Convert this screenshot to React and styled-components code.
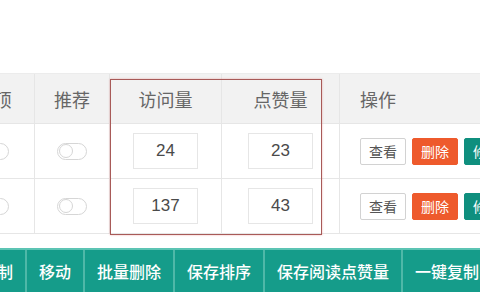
import React from "react";
import styled, { createGlobalStyle } from "styled-components";

const GlobalStyle = createGlobalStyle`
  html, body {
    margin: 0;
    padding: 0;
    background: #fff;
    font-family: "Noto Sans CJK SC", "Noto Sans", sans-serif;
  }
`;

const Page = styled.div`
  position: relative;
  width: 480px;
  height: 300px;
  overflow: hidden;
  padding-top: 73px;
  box-sizing: border-box;
`;

const Table = styled.div`
  margin-left: -47px;
  width: 600px;
  border-top: 1px solid #ececec;
`;

const Row = styled.div`
  display: grid;
  grid-template-columns: 82px 75px 112px 118px 1fr;
  height: ${(p) => (p.$head ? "49px" : "54px")};
  background: ${(p) => (p.$head ? "#f2f2f2" : "#fff")};
  border-bottom: 1px solid #e6e6e6;
`;

const Cell = styled.div`
  display: flex;
  align-items: center;
  justify-content: ${(p) => (p.$left ? "flex-start" : "center")};
  padding-left: ${(p) => (p.$left ? "20px" : "0")};
  border-right: 1px solid #e6e6e6;
  color: #666;
  font-size: ${(p) => (p.$head ? "18px" : "17px")};
  gap: 6px;
`;

const NumInput = styled.div`
  width: 65px;
  height: 36px;
  box-sizing: border-box;
  border: 1px solid #e6e6e6;
  display: flex;
  align-items: center;
  justify-content: center;
  font-family: "Liberation Sans", Arial, sans-serif;
  font-size: 17px;
  color: #4a4a4a;
  background: #fff;
`;

const Switch = styled.span`
  position: relative;
  width: 30px;
  height: 17px;
  box-sizing: border-box;
  border: 1.5px solid #d6d6d6;
  border-radius: 9px;

  &::before {
    content: "";
    position: absolute;
    left: 1px;
    top: 0px;
    width: 14px;
    height: 14px;
    box-sizing: border-box;
    border: 1.5px solid #d6d6d6;
    border-radius: 50%;
    background: #fff;
  }
`;

const Btn = styled.span`
  height: 27px;
  padding: 0 8px;
  box-sizing: border-box;
  display: inline-flex;
  align-items: center;
  font-size: 14px;
  border-radius: 2px;
  white-space: nowrap;
  color: ${(p) => (p.$kind === "plain" ? "#555" : "#fff")};
  background: ${(p) =>
    p.$kind === "danger" ? "#ee5a2c" : p.$kind === "teal" ? "#0f8f7e" : "#fff"};
  border: 1px solid
    ${(p) =>
      p.$kind === "danger" ? "#ee5a2c" : p.$kind === "teal" ? "#0f8f7e" : "#d2d2d2"};
`;

const Toolbar = styled.div`
  display: flex;
  margin-top: 14px;
  margin-left: -31px;
  height: 44px;
  background: #159c8a;
  border-top: 2px solid #5cc4b4;
  box-sizing: border-box;
`;

const ToolBtn = styled.div`
  display: flex;
  align-items: center;
  padding: 0 12px;
  color: #fff;
  font-size: 16px;
  font-weight: 500;
  white-space: nowrap;
  border-right: 2px solid #4fb8a8;
`;

const Mark = styled.div`
  position: absolute;
  left: 110px;
  top: 79px;
  width: 212px;
  height: 156px;
  box-sizing: border-box;
  border: 1.5px solid #a85a58;
  box-shadow: 0 0 2px rgba(220, 90, 90, 0.45);
  pointer-events: none;
`;

const rows = [
  { visits: 24, likes: 23 },
  { visits: 137, likes: 43 },
];

const tools = ["复制", "移动", "批量删除", "保存排序", "保存阅读点赞量", "一键复制"];

export default function App() {
  return (
    <Page>
      <GlobalStyle />
      <Table>
        <Row $head>
          <Cell $head>置顶</Cell>
          <Cell $head>推荐</Cell>
          <Cell $head>访问量</Cell>
          <Cell $head>点赞量</Cell>
          <Cell $head $left>操作</Cell>
        </Row>
        {rows.map((r, i) => (
          <Row key={i}>
            <Cell>
              <Switch />
            </Cell>
            <Cell>
              <Switch />
            </Cell>
            <Cell>
              <NumInput>{r.visits}</NumInput>
            </Cell>
            <Cell>
              <NumInput>{r.likes}</NumInput>
            </Cell>
            <Cell $left>
              <Btn $kind="plain">查看</Btn>
              <Btn $kind="danger">删除</Btn>
              <Btn $kind="teal">修改</Btn>
            </Cell>
          </Row>
        ))}
      </Table>
      <Toolbar>
        {tools.map((t) => (
          <ToolBtn key={t}>{t}</ToolBtn>
        ))}
      </Toolbar>
      <Mark />
    </Page>
  );
}
